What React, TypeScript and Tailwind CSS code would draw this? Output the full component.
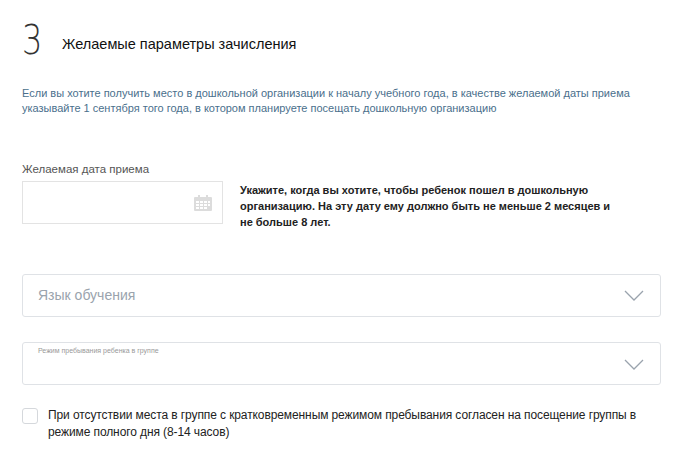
export default function App() {
  const Chev = () => (
    <svg width="20" height="12" viewBox="0 0 20 12" fill="none" stroke="#9aa3ad" strokeWidth="1.3"><path d="M1 1l9 9 9-9" /></svg>
  );
  return (
    <div className="w-[680px] h-[462px] bg-white pl-[22px] pr-[19px]" style={{ fontFamily: '"Liberation Sans", Arial, sans-serif' }}>
      <div className="flex items-end pt-[22px] h-[58px]">
        <span className="text-[40px] leading-[36px] text-[#333] w-[40px]" style={{ fontFamily: '"DejaVu Sans", sans-serif', fontWeight: 200, transform: 'scaleX(0.8)', transformOrigin: 'left' }}>3</span>
        <span className="text-[14.5px] text-[#111] mb-[2px]">Желаемые параметры зачисления</span>
      </div>
      <p className="mt-[28px] text-[11px] leading-[15px] text-[#4a6f8c]">Если вы хотите получить место в дошкольной организации к началу учебного года, в качестве желаемой даты приема указывайте 1 сентября того года, в котором планируете посещать дошкольную организацию</p>
      <div className="mt-[45px] text-[11.5px] text-[#555]">Желаемая дата приема</div>
      <div className="flex mt-[3px] gap-[17px]">
        <div className="w-[201px] h-[43px] border border-[#e3e3e3] flex items-center justify-end pr-[10px] shrink-0">
          <svg width="18" height="16" viewBox="0 0 18 16" fill="#dcdcdc"><rect x="0" y="2" width="18" height="14" rx="1"/><rect x="4" y="0" width="2" height="4"/><rect x="12" y="0" width="2" height="4"/><g fill="#fff"><rect x="2" y="6" width="3" height="2"/><rect x="6" y="6" width="3" height="2"/><rect x="10" y="6" width="3" height="2"/><rect x="14" y="6" width="2" height="2"/><rect x="2" y="9" width="3" height="2"/><rect x="6" y="9" width="3" height="2"/><rect x="10" y="9" width="3" height="2"/><rect x="14" y="9" width="2" height="2"/><rect x="2" y="12" width="3" height="2"/><rect x="6" y="12" width="3" height="2"/><rect x="10" y="12" width="3" height="2"/></g></svg>
        </div>
        <p className="text-[11px] font-bold leading-[16px] text-[#222] pt-[1px] w-[380px]">Укажите, когда вы хотите, чтобы ребенок пошел в дошкольную организацию. На эту дату ему должно быть не меньше 2 месяцев и не больше 8 лет.</p>
      </div>
      <div className="mt-[44px] h-[43px] border border-[#dfe2e6] rounded-[3px] flex items-center justify-between pl-[15px] pr-[16px]">
        <span className="text-[14px] text-[#9aa3ad]">Язык обучения</span>
        <Chev />
      </div>
      <div className="mt-[25px] h-[43px] border border-[#dfe2e6] rounded-[3px] relative flex items-center justify-end pr-[16px]">
        <span className="absolute left-[15px] top-[3px] text-[7px] text-[#999]">Режим пребывания ребенка в группе</span>
        <div className="mt-[3px]"><Chev /></div>
      </div>
      <div className="flex mt-[22px] gap-[10px]">
        <div className="w-[16px] h-[16px] border border-[#d5d8dc] rounded-[3px] shrink-0 mt-[1px]" />
        <p className="text-[12px] leading-[17px] text-[#222] tracking-[-0.1px]">При отсутствии места в группе с кратковременным режимом пребывания согласен на посещение группы в режиме полного дня (8-14 часов)</p>
      </div>
    </div>
  );
}
